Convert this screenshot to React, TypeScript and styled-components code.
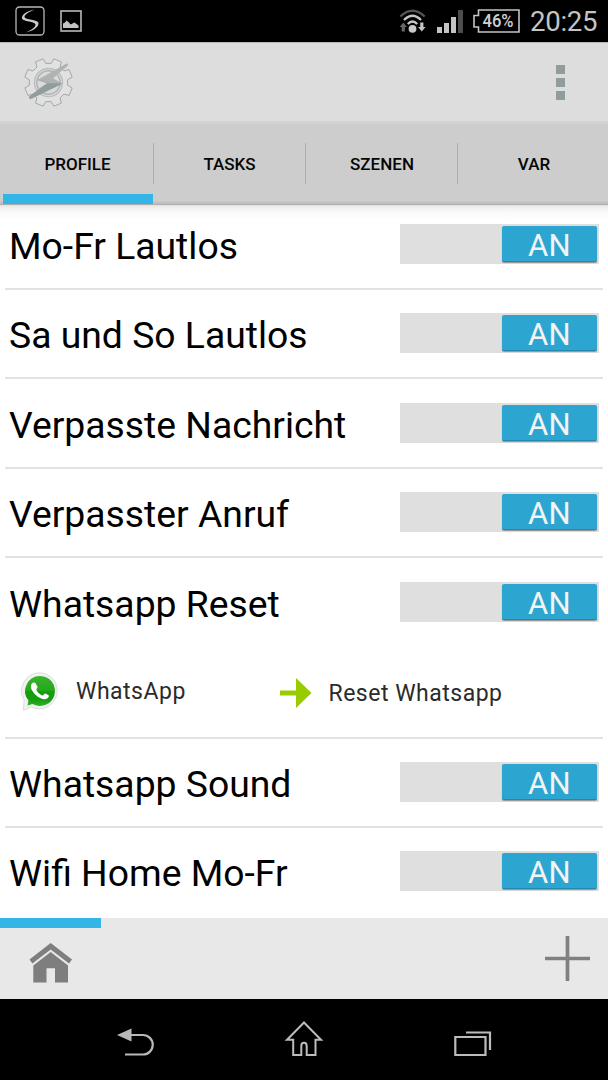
import React from "react";
import styled, { createGlobalStyle } from "styled-components";

const GlobalStyle = createGlobalStyle`
  * { box-sizing: border-box; }
  body { margin: 0; background: #fff; font-family: Roboto, "Liberation Sans", sans-serif; }
  svg { display: block; flex: none; overflow: visible; }
`;

const Screen = styled.div`
  width: 608px;
  height: 1080px;
  display: flex;
  flex-direction: column;
  overflow: hidden;
  background: #fff;
`;

const StatusBar = styled.header`
  height: 42px;
  flex: none;
  display: flex;
  justify-content: space-between;
  background: #000;
  color: #c4c4c4;
  padding: 0 10px 0 15px;
`;

const StatusGroup = styled.div<{ $gap: number }>`
  display: flex;
  align-items: center;
  gap: ${(p) => p.$gap}px;
`;

const Clock = styled.span`
  font-size: 27.6px;
  line-height: 42px;
  white-space: nowrap;
  letter-spacing: -0.3px;
  padding-top: 2px;
  margin-left: -1px;
  width: 68px;
`;

const ActionBar = styled.div`
  height: 79px;
  flex: none;
  display: flex;
  align-items: center;
  justify-content: space-between;
  background: #ddd;
  border-top: 1px solid #bababa;
  padding: 0 43px 0 24px;
`;

const MenuDots = styled.div`
  display: flex;
  flex-direction: column;
  gap: 4px;
`;

const MenuDot = styled.i`
  width: 9px;
  height: 9px;
  background: #919c9d;
`;

const TabBar = styled.nav`
  height: 84px;
  flex: none;
  display: grid;
  grid-template-columns: repeat(4, 1fr);
  background: linear-gradient(#d5d5d5 0, #cdcdcd 4px, #cdcdcd 80px, #c2c2c2 81px, #bdbdbd 83px, #9e9e9e 84px);
`;

const Tab = styled.button<{ $active?: boolean }>`
  position: relative;
  border: 0;
  background: none;
  padding: 2px 0 0 3px;
  font: 500 17px Roboto, sans-serif;
  color: #060606;

  &:nth-child(n + 3) {
    padding-left: 4px;
  }

  &:not(:last-child)::before {
    content: "";
    position: absolute;
    right: -2px;
    top: 22px;
    width: 1px;
    height: 41px;
    background: #adadad;
  }

  &::after {
    content: "";
    display: ${(p) => (p.$active ? "block" : "none")};
    position: absolute;
    left: 3px;
    right: -1px;
    bottom: 1px;
    height: 10px;
    background: #33b5e5;
  }
`;

const List = styled.main`
  height: 713px;
  flex: none;
  overflow: hidden;
  display: flex;
  flex-direction: column;
  background: linear-gradient(#e2e2e2 0, #f1f1f1 3px, #fafafa 8px, #fff 15px);
`;

const Row = styled.section<{ $first?: boolean }>`
  flex: none;
  margin: 0 5px;
  padding-top: ${(p) => (p.$first ? 19 : 23.4)}px;
  border-bottom: 2px solid #e2e2e2;

  &:last-child {
    border-bottom: 0;
  }
`;

const RowHead = styled.div`
  display: flex;
  justify-content: space-between;
  height: 64px;
  padding: 0 4px;
`;

const ProfileName = styled.span`
  font-size: 37.3px;
  line-height: 44px;
  color: #000;
  white-space: nowrap;
`;

const SwitchTrack = styled.div`
  width: 199px;
  height: 40px;
  background: #dfdfdf;
  display: flex;
  justify-content: flex-end;
  padding: 2px 2px 2px 0;
`;

const SwitchThumb = styled.div`
  width: 95px;
  height: 36px;
  border-radius: 2px;
  background: #2ca6d0;
  border-bottom: 1px solid #2388ac;
  box-shadow: 0 1px 1px rgba(0, 0, 0, 0.35);
  color: #f3f3f3;
  font-size: 31px;
  line-height: 40.500px;
  text-align: center;
  letter-spacing: 0.4px;
`;

const Detail = styled.div`
  display: grid;
  grid-template-columns: 55.500px 203.500px 49px 1fr;
  height: 91px;
  padding: 0 0 0 15.500px;
`;

const DetailText = styled.span<{ $top: number }>`
  font-size: 23px;
  line-height: 28px;
  padding-top: ${(p) => p.$top}px;
  color: #2b2b2b;
  white-space: nowrap;
  letter-spacing: 0.5px;
`;

const IconSlot = styled.span<{ $top: number }>`
  padding-top: ${(p) => p.$top}px;
`;

const BottomBar = styled.footer`
  height: 81px;
  flex: none;
  background: #e8e8e8;
`;

const Indicator = styled.div`
  width: 101px;
  height: 10px;
  background: #33b5e5;
`;

const BottomActions = styled.div`
  display: flex;
  justify-content: space-between;
  align-items: flex-end;
  height: 56px;
  padding: 0 18px 0 29px;
`;

const ActionSlot = styled.span<{ $bottom: number }>`
  padding-bottom: ${(p) => p.$bottom}px;
`;

const NavBar = styled.nav`
  height: 81px;
  flex: none;
  background: #000;
  display: grid;
  grid-template-columns: repeat(3, 169px);
  justify-content: center;
  justify-items: center;
  padding-top: 22px;
`;

const SketchIcon = () => (
  <svg width="30" height="30" viewBox="0 0 30 30">
    <rect x="1" y="1" width="28" height="28" rx="3.5" fill="none" stroke="#b4b8b8" strokeWidth="1.3" />
    <path d="M19.500 3.500C12 5 6.500 8.500 7 12.500C7.500 15.500 20.500 15.500 20.500 18.500C20.500 22 15 24.500 10.500 26.500C18 25 24 21 23.500 17C23 13.500 9.800 14 9.500 11C9.300 8.500 14 6 19.500 3.500Z" fill="#c8cccc" />
  </svg>
);

const PictureIcon = () => (
  <svg width="22" height="22" viewBox="0 0 22 22">
    <rect x="1" y="1" width="20" height="20" fill="none" stroke="#b9b9b9" strokeWidth="1.600" />
    <path d="M3 18V13.500L5 12.500L6.500 10.500L9 12.500L10.500 14.500L14.500 12.500L18.500 15.500V18Z" fill="#c4c4c4" />
  </svg>
);

const WifiIcon = () => (
  <svg width="26" height="24" viewBox="0 0 26 24">
    <g transform="translate(.5 0)">
      <g fill="none" strokeLinecap="butt">
        <path d="M.8 7.500Q13-4 25.200 7.500" stroke="#555" strokeWidth="2.200" />
        <path d="M4.500 11Q13 2.500 21.500 11" stroke="#c4c4c4" strokeWidth="2.300" />
        <path d="M8.300 15Q13 10 17.700 15" stroke="#c4c4c4" strokeWidth="2.300" />
      </g>
      <circle cx="13" cy="19.800" r="3.900" fill="#c9c9c9" />
      <path d="M3.800 13.500L7.500 18H5.400V22.500H2.200V18H.1Z" fill="#666" />
      <path d="M22.300 22.500L26 18H23.900V13.500H20.700V18H18.600Z" fill="#c4c4c4" />
    </g>
  </svg>
);

const SignalIcon = () => (
  <svg width="26" height="24" viewBox="0 0 26 24">
    <path d="M1 18H6V24H1ZM8 14H13V24H8ZM15 8H20V24H15Z" fill="#c4c4c4" />
    <path d="M22 1H27V24H22Z" fill="#4d4d4d" />
  </svg>
);

const BatteryIcon = () => (
  <svg width="47" height="24" viewBox="0 0 47 24">
    <path d="M5.500 1H46V23H5.500V18H1V6.500H5.500Z" fill="none" stroke="#c4c4c4" strokeWidth="1.600" />
    <text x="25" y="17.800" textAnchor="middle" fontFamily="Roboto, sans-serif" fontWeight="500" fontSize="18" textLength="31" lengthAdjust="spacingAndGlyphs" fill="#d0d0d0">46%</text>
  </svg>
);

const gearPoints = (() => {
  const points: string[] = [];
  for (let i = 0; i < 8; i++) {
    const mid = (i * 45 + 22.5) * (Math.PI / 180);
    for (const [offset, radius] of [[-0.25, 19.3], [-0.17, 24.3], [0.17, 24.3], [0.25, 19.3]]) {
      points.push(`${(24.5 + radius * Math.cos(mid + offset)).toFixed(2)},${(24.5 + radius * Math.sin(mid + offset)).toFixed(2)}`);
    }
  }
  return points.join(" ");
})();

const TaskerLogo = () => (
  <svg width="49" height="49" viewBox="0 0 49 49">
    <polygon points={gearPoints} fill="#e1e1e1" stroke="#8f9c9c" strokeWidth=".8" strokeLinejoin="round" />
    <circle cx="24.500" cy="24.500" r="14" fill="#dedede" stroke="#bdbdbd" strokeWidth="1.400" />
    <circle cx="24.500" cy="24.500" r="11.700" fill="#d9dbdb" stroke="#adb2b2" strokeWidth="1.500" />
    <path d="M25 24L17.500 29L5.200 38.500Q4.300 41.500 7.500 40.800L38 26L30 22.500Z" fill="#919c9e" />
    <path d="M42.500 5.500Q45 5 43.500 8L29 20.300L37.800 25.200L25 25.500L13.800 21.800Z" fill="#b0b3b3" />
    <path d="M13.800 21.800L25 25.500L37.800 25.400" fill="none" stroke="#98a1a2" strokeWidth=".8" />
  </svg>
);

const WhatsAppIcon = () => (
  <svg width="38" height="40" viewBox="0 0 38 40">
    <defs>
      <linearGradient id="bubble" x1="0" y1="0" x2="0" y2="1">
        <stop offset="0" stopColor="#35b52c" />
        <stop offset=".48" stopColor="#28a71e" />
        <stop offset=".52" stopColor="#159b0e" />
        <stop offset=".8" stopColor="#169e10" />
        <stop offset="1" stopColor="#2fb526" />
      </linearGradient>
    </defs>
    <path d="M19 .8A18 18 0 1 1 10.500 35L2.300 38.300L3.200 28A18 18 0 0 1 19 .8Z" fill="#f1f1f1" stroke="#dedede" strokeWidth="1" />
    <path d="M19 4A15 15 0 1 1 11.500 32L6.500 33.500L7.500 28.500A15 15 0 0 1 19 4Z" fill="url(#bubble)" />
    <path d="M11.500 11C12.500 10.300 14 10.300 14.700 11.500L16.500 14.700C17 15.800 15.300 16.800 15.300 17.800C16 20 19.500 23 21.500 23.500C22.500 23.500 23.300 21.300 24.500 21.600L27.500 23.200C28.500 24 27.500 25.500 26.500 26.200C23.500 28.300 19.500 26.500 16.500 24.500C13.500 22.300 10.500 18.500 10 15.500C9.700 13.500 10.300 11.900 11.500 11Z" fill="#fff" />
  </svg>
);

const ArrowIcon = () => (
  <svg width="32" height="30" viewBox="0 0 32 30">
    <path d="M0 12.500H16V0L31.500 15L16 30V17.500H0Z" fill="#99cc00" />
  </svg>
);

const HomeSolidIcon = () => (
  <svg width="44" height="41" viewBox="0 0 44 41">
    <path d="M21.700 0L43 16.500L40 20.500L21.700 6.500L3.400 20.500L.5 16.500Z" fill="#7e7e7e" />
    <path d="M21.700 9L39 22.500V39.500H26V25.300H17.500V39.500H4.300V22.500Z" fill="#7e7e7e" />
  </svg>
);

const PlusIcon = () => (
  <svg width="45" height="45" viewBox="0 0 45 45">
    <path d="M22.500 0V45M0 22.500H45" stroke="#808080" strokeWidth="3.700" />
  </svg>
);

const BackIcon = () => (
  <svg width="36" height="36" viewBox="0 0 36 36">
    <path d="M0 14L14.500 7.500V20.500Z" fill="#b9b9b9" />
    <path d="M13 14H26A9.700 9.700 0 0 1 26 33.500H8" fill="none" stroke="#b9b9b9" strokeWidth="2.200" />
  </svg>
);

const HomeIcon = () => (
  <svg width="38" height="36" viewBox="0 0 38 36">
    <path d="M19 1.500L36 18.700H30.500V34H21.700V25Q21.700 21.700 19 21.700Q16.300 21.700 16.300 25V34H8.200V18.700H2Z" fill="none" stroke="#bcbcbc" strokeWidth="2" />
  </svg>
);

const RecentsIcon = () => (
  <svg width="38" height="36" viewBox="0 0 38 36">
    <path d="M1.300 16H31.500V34H1.300ZM12 11.500H36V29" fill="none" stroke="#bcbcbc" strokeWidth="2.200" />
  </svg>
);

const tabs = ["PROFILE", "TASKS", "SZENEN", "VAR"];

const profiles = [
  { name: "Mo-Fr Lautlos" },
  { name: "Sa und So Lautlos" },
  { name: "Verpasste Nachricht" },
  { name: "Verpasster Anruf" },
  { name: "Whatsapp Reset", context: "WhatsApp", task: "Reset Whatsapp" },
  { name: "Whatsapp Sound" },
  { name: "Wifi Home Mo-Fr" },
];

export default function App() {
  return (
    <Screen>
      <GlobalStyle />
      <StatusBar>
        <StatusGroup $gap={15}>
          <SketchIcon />
          <PictureIcon />
        </StatusGroup>
        <StatusGroup $gap={11}>
          <WifiIcon />
          <SignalIcon />
          <BatteryIcon />
          <Clock>20:25</Clock>
        </StatusGroup>
      </StatusBar>
      <ActionBar>
        <TaskerLogo />
        <MenuDots>
          <MenuDot />
          <MenuDot />
          <MenuDot />
        </MenuDots>
      </ActionBar>
      <TabBar>
        {tabs.map((label, i) => (
          <Tab key={label} $active={i === 0}>{label}</Tab>
        ))}
      </TabBar>
      <List>
        {profiles.map((profile, i) => (
          <Row key={profile.name} $first={i === 0}>
            <RowHead>
              <ProfileName>{profile.name}</ProfileName>
              <SwitchTrack>
                <SwitchThumb>AN</SwitchThumb>
              </SwitchTrack>
            </RowHead>
            {profile.context && (
              <Detail>
                <IconSlot $top={26}><WhatsAppIcon /></IconSlot>
                <DetailText $top={32}>{profile.context}</DetailText>
                <IconSlot $top={32}><ArrowIcon /></IconSlot>
                <DetailText $top={34}>{profile.task}</DetailText>
              </Detail>
            )}
          </Row>
        ))}
      </List>
      <BottomBar>
        <Indicator />
        <BottomActions>
          <HomeSolidIcon />
          <ActionSlot $bottom={3}><PlusIcon /></ActionSlot>
        </BottomActions>
      </BottomBar>
      <NavBar>
        <BackIcon />
        <HomeIcon />
        <RecentsIcon />
      </NavBar>
    </Screen>
  );
}
